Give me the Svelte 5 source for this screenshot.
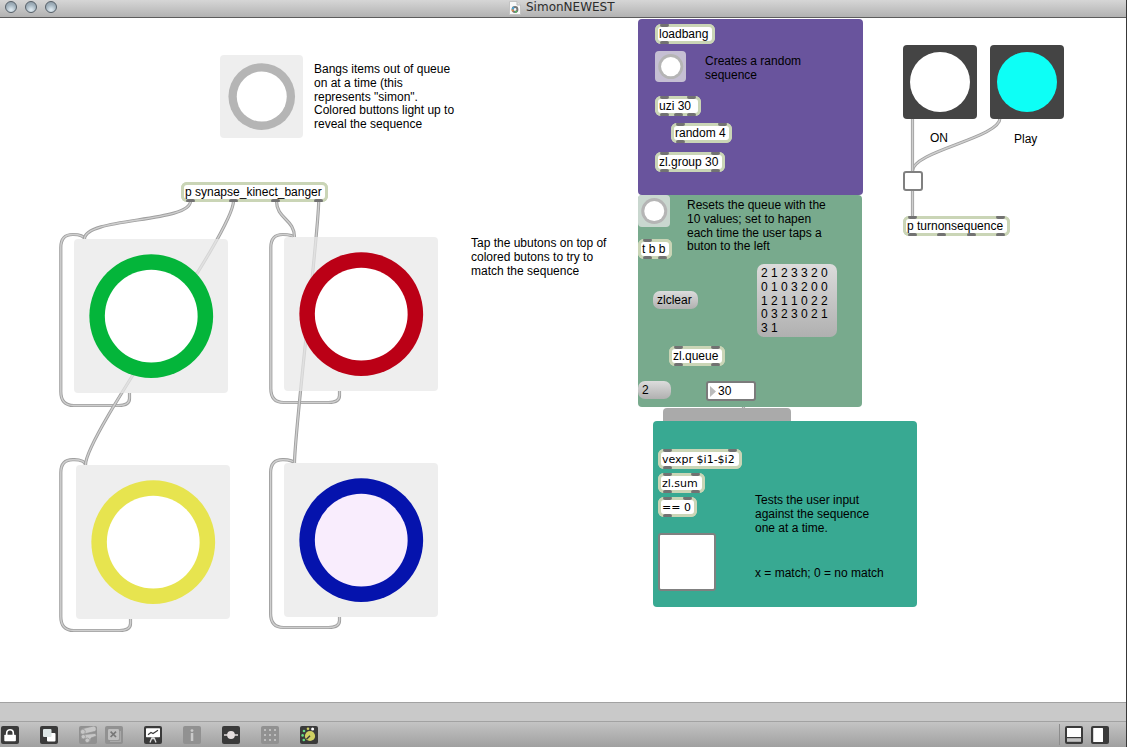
<script>
  const ORIGIN_Y = 18;

  const place = (n) =>
    `left:${n.x}px;top:${n.y - ORIGIN_Y}px;` +
    (n.w ? `width:${n.w}px;` : '') +
    (n.h ? `height:${n.h}px;` : '');

  const panels = [
    { x: 663, y: 408, w: 128, h: 20, color: '#aaaaaa' },
    { x: 638, y: 195, w: 224, h: 212, color: '#78aa8d' },
    { x: 638, y: 19, w: 225, h: 176, color: '#69549d' },
    { x: 653, y: 421, w: 264, h: 186, color: '#38a992' }
  ];

  const bangs = [
    { x: 220, y: 55, w: 83, h: 83, outer: 66.6, ring: 8.3, color: '#b5b5b5', fill: '#fff' },
    { x: 74, y: 239, w: 154, h: 154, outer: 123.8, ring: 15.5, color: '#04b53a', fill: '#fff' },
    { x: 284, y: 237, w: 154, h: 154, outer: 123.8, ring: 15.5, color: '#bb0016', fill: '#fff' },
    { x: 76, y: 465, w: 154, h: 154, outer: 123.8, ring: 15.5, color: '#e7e44f', fill: '#fff' },
    { x: 284, y: 463, w: 154, h: 154, outer: 123.8, ring: 15.5, color: '#0513ad', fill: '#f9edfd' },
    { x: 655, y: 51, w: 31, h: 31, outer: 25, ring: 2.8, color: '#b5b5b5', fill: '#fff' },
    { x: 638, y: 195, w: 32, h: 32, outer: 26, ring: 3, color: '#b5b5b5', fill: '#fff' }
  ];

  const objects = [
    { x: 181, y: 182, w: 147, text: 'p synapse_kinect_banger', ins: 0, outs: 4 },
    { x: 655, y: 24, w: 60, text: 'loadbang', ins: 1, outs: 1 },
    { x: 655, y: 96, w: 46, text: 'uzi 30', ins: 2, outs: 3 },
    { x: 671, y: 123, w: 61, text: 'random 4', ins: 2, outs: 1 },
    { x: 655, y: 152, w: 70, text: 'zl.group 30', ins: 2, outs: 2 },
    { x: 638, y: 239, w: 34, text: 't b b', ins: 1, outs: 2 },
    { x: 669, y: 346, w: 56, text: 'zl.queue', ins: 2, outs: 2 },
    { x: 658, y: 449, w: 84, text: 'vexpr $i1-$i2', ins: 2, outs: 1, wide: true },
    { x: 658, y: 473, w: 47, text: 'zl.sum', ins: 2, outs: 2, wide: true },
    { x: 658, y: 497, w: 39, text: '== 0', ins: 2, outs: 1, wide: true },
    { x: 903, y: 216, w: 107, text: 'p turnonsequence', ins: 2, outs: 4 }
  ];

  const messages = [
    { x: 757, y: 264, w: 80, h: 73, lines: ['2 1 2 3 3 2 0', '0 1 0 3 2 0 0', '1 2 1 1 0 2 2', '0 3 2 3 0 2 1', '3 1'] },
    { x: 653, y: 291, w: 45, h: 18, lines: ['zlclear'] },
    { x: 638, y: 381, w: 33, h: 18, lines: ['2'] }
  ];

  const comments = [
    { x: 314, y: 63, lines: ['Bangs items out of queue', 'on at a time (this', 'represents "simon".', 'Colored buttons light up to', 'reveal the sequence'] },
    { x: 471, y: 237, lines: ['Tap the ubutons on top of', 'colored butons to try to', 'match the sequence'] },
    { x: 705, y: 55, lines: ['Creates a random', 'sequence'] },
    { x: 687, y: 199, lines: ['Resets the queue with the', '10 values; set to hapen', 'each time the user taps a', 'buton to the left'] },
    { x: 755, y: 494, lines: ['Tests the user input', 'against the sequence', 'one at a time.'] },
    { x: 755, y: 567, lines: ['x = match; 0 = no match'] },
    { x: 930, y: 132, lines: ['ON'] },
    { x: 1014, y: 133, lines: ['Play'] }
  ];

  const lamps = [
    { x: 903, y: 45, w: 74, h: 74, color: '#ffffff' },
    { x: 990, y: 45, w: 74, h: 74, color: '#0dfff6' }
  ];

  const toggles = [
    { x: 903, y: 171, w: 20, h: 20 },
    { x: 658, y: 533, w: 58, h: 58 }
  ];

  const cord = (x1, y1, x2, y2, k) => `M${x1} ${y1}C${x1} ${y1 + k} ${x2} ${y2 - k} ${x2} ${y2}`;

  const loop = (left, top, right, bottom, startY, endX, endY) =>
    `M${right} ${startY}V${bottom - 7}C${right} ${bottom - 2} ${right - 5} ${bottom} ${right - 11} ${bottom}` +
    `H${left + 13}C${left + 4} ${bottom} ${left} ${bottom - 5} ${left} ${bottom - 14}` +
    `V${top + 13}C${left} ${top + 4} ${left + 4} ${top} ${left + 12} ${top}` +
    `H${endX - 11}C${endX - 5} ${top} ${endX} ${top + 2} ${endX} ${endY}`;

  const cords = [
    loop(60.8, 234.5, 129.5, 405.5, 393, 84.5, 239),
    loop(270.8, 234.5, 339.5, 402.5, 391, 294.5, 237),
    loop(60.8, 459.7, 130.5, 630.5, 619, 85.5, 465),
    loop(270.6, 459.7, 339.5, 627.5, 617, 294.5, 463),
    cord(190.5, 201, 84.5, 239, 22),
    cord(233.5, 201, 85.5, 465, 32),
    cord(276.5, 201, 294.5, 237, 18),
    cord(318.7, 201, 294.5, 463, 32),
    cord(1000, 118, 912.5, 171, 20),
    'M912.5 118V171',
    'M912.5 190V217',
    'M743.5 400V409'
  ];

  const tools = [
    { id: 'lock' }, { id: 'layers' }, { id: 'cable', off: true }, { id: 'close', off: true, near: true },
    { id: 'present' }, { id: 'info', off: true }, { id: 'slider' }, { id: 'grid', off: true }, { id: 'dial' }
  ];
</script>

<div class="window">
  <header class="titlebar">
    <div class="lights"><i></i><i></i><i></i></div>
    <div class="title">
      <svg width="12" height="14" viewBox="0 0 12 14">
        <path d="M.5.5H8L11.5 4V13.5H.5Z" fill="#f8f8f8" stroke="#c3c3c3" />
        <path d="M8 .5V4H11.5" fill="#ddd" stroke="#bbb" />
        <circle cx="6" cy="8.5" r="2.4" fill="none" stroke="#777" stroke-width="2" />
        <path d="M3.6 8.5A2.4 2.4 0 0 1 5 6.3" fill="none" stroke="#49a5d8" stroke-width="2" />
        <path d="M4 10.2A2.4 2.4 0 0 1 3.6 8.5" fill="none" stroke="#e78b45" stroke-width="2" />
        <path d="M6 10.9A2.4 2.4 0 0 0 7.8 10" fill="none" stroke="#58b861" stroke-width="2" />
      </svg>
      <span>SimonNEWEST</span>
    </div>
  </header>

  <main class="patcher">
    <svg class="cords" width="1127" height="684" viewBox="0 18 1127 684">
      {#each cords as d}
        <path {d} class="edge" />
        <path {d} class="core" />
      {/each}
    </svg>

    {#each panels as p}
      <div class="node panel" style="{place(p)}background:{p.color}"></div>
    {/each}

    {#each bangs as b}
      <div class="node bang" style={place(b)}>
        <svg width={b.w} height={b.h}>
          <circle cx={b.w / 2 + 0.25} cy={b.h / 2 + 0.1} r={b.outer / 2} fill={b.color} />
          <circle cx={b.w / 2 + 0.25} cy={b.h / 2 + 0.1} r={b.outer / 2 - b.ring} fill={b.fill} />
        </svg>
      </div>
    {/each}

    {#each lamps as l}
      <div class="node lamp" style={place(l)}><i style="background:{l.color}"></i></div>
    {/each}

    {#each toggles as t}
      <div class="node toggle" style={place(t)}></div>
    {/each}

    {#each objects as o}
      <div class="node object" class:wide={o.wide} style={place(o)}>
        <div class="ports">{#each Array(o.ins) as _}<i></i>{/each}</div>
        <span>{o.text}</span>
        <div class="ports outs">{#each Array(o.outs) as _}<i></i>{/each}</div>
      </div>
    {/each}

    {#each messages as m}
      <div class="node message" style={place(m)}>
        {#each m.lines as line}<div>{line}</div>{/each}
      </div>
    {/each}

    <div class="node number" style={place({ x: 706, y: 381, w: 50, h: 20 })}>
      <svg width="6" height="11" viewBox="0 0 6 11"><path d="M0 0L6 5.5L0 11Z" fill="#bbb" /></svg>
      <span>30</span>
    </div>

    {#each comments as c}
      <div class="node comment" style={place(c)}>
        {#each c.lines as line}<div>{line}</div>{/each}
      </div>
    {/each}
  </main>

  <div class="status"></div>

  <footer class="toolbar">
    {#each tools as t}
      <svg class="tool" class:off={t.off} class:near={t.near} width="18" height="18" viewBox="0 0 18 18">
        <rect class="tile" width="18" height="18" rx="2" />
        {#if t.id === 'lock'}
          <path d="M5.7 9V7C5.7 2.6 12.3 2.6 12.3 7V9" fill="none" stroke="#fff" stroke-width="1.6" />
          <rect x="3.3" y="8.7" width="11.6" height="6.6" rx=".8" fill="#fff" />
        {:else if t.id === 'layers'}
          <rect x="7" y="7" width="8.5" height="8.5" rx="1" fill="#fff" />
          <rect x="3" y="3" width="8.5" height="8" rx="1" fill="#dde5e5" />
        {:else if t.id === 'cable'}
          <g fill="#c6c6c6" stroke="#929292" stroke-width=".7">
            <rect x="2.4" y="1.4" width="15" height="5.6" rx="2.3" transform="rotate(-13 9 4.5)" />
            <circle cx="3.8" cy="5.8" r="2.5" />
            <path d="M4.5 8.6L16.5 7.4L17.5 10L12 12L11 15.5L7.5 16.8L5.6 14L8.5 12.4L4.5 12.8Z" />
            <circle cx="4.3" cy="10.7" r="2.2" />
            <circle cx="8.3" cy="14.3" r="2.3" />
          </g>
        {:else if t.id === 'close'}
          <path d="M5 15.3H15.3V5" fill="none" stroke="#ababab" stroke-width="1.2" />
          <rect x="3" y="3" width="11" height="11" rx="1.2" fill="#bebebe" />
          <path d="M5.6 5.6L11 11M11 5.6L5.6 11" stroke="#777" stroke-width="1.7" />
        {:else if t.id === 'present'}
          <rect x="2" y="2.2" width="14" height="9" rx=".6" fill="#fff" />
          <path d="M4 8.8L7 6.5L9 7.5L14 4.2" fill="none" stroke="#3a3a3a" stroke-width="1.1" />
          <path d="M8 11.5L6 16.5M10 11.5L12 16.5M9 11V13.5" fill="none" stroke="#ddd" stroke-width="1.3" />
        {:else if t.id === 'info'}
          <circle cx="9" cy="4.6" r="1.4" fill="#cacaca" />
          <rect x="7.8" y="7" width="2.5" height="8" rx=".5" fill="#cacaca" />
        {:else if t.id === 'slider'}
          <path d="M2 9H16" stroke="#d8d3d3" stroke-width="1.6" />
          <circle cx="9" cy="9" r="3.9" fill="#e4dede" />
        {:else if t.id === 'grid'}
          {#each [3, 8, 13] as gx}
            {#each [3, 8, 13] as gy}
              <rect x={gx} y={gy} width="2" height="2" fill="#bdbdbd" />
            {/each}
          {/each}
        {:else}
          <circle cx="10" cy="10" r="5.1" fill="#cfd063" />
          <path d="M6.5 13.3L10 9.8" stroke="#3a3a3a" stroke-width="1.5" />
          <circle cx="3.8" cy="14" r="1.3" fill="#63dd83" />
          <circle cx="2.6" cy="9.4" r="1.3" fill="#63dd83" />
          <circle cx="4" cy="5" r="1.3" fill="#63dd83" />
          <circle cx="8" cy="2.7" r="1.3" fill="#cfd063" />
          <circle cx="12.6" cy="3" r="1.5" fill="#fff" />
        {/if}
      </svg>
    {/each}
    <div class="views">
      <svg width="18" height="18" viewBox="0 0 18 18">
        <rect class="tile" width="18" height="18" rx="2" />
        <rect x="2" y="2" width="14" height="9" fill="#fff" />
        <rect x="2" y="12.2" width="14" height="3.6" fill="#c4c4c4" />
      </svg>
      <svg width="18" height="18" viewBox="0 0 18 18">
        <rect class="tile" width="18" height="18" rx="2" />
        <rect x="2.2" y="2" width="9.8" height="14" rx=".5" fill="#fff" />
      </svg>
    </div>
  </footer>
</div>

<style>
  .window {
    box-sizing: border-box;
    width: 1127px;
    height: 747px;
    display: flex;
    flex-direction: column;
    overflow: hidden;
    background: #fff;
    border-right: 1px solid #383838;
    font: 12px/13.8px "Liberation Sans", Arial, sans-serif;
    color: #000;
  }
  .titlebar {
    flex: none;
    box-sizing: border-box;
    height: 18px;
    display: flex;
    align-items: flex-start;
    background: linear-gradient(#d6d6d6, #b2b2b2);
    border-bottom: 1px solid #5c5c5c;
  }
  .lights {
    display: flex;
    gap: 8px;
    padding: 1px 0 0 5px;
    width: 503px;
    box-sizing: border-box;
  }
  .lights i {
    box-sizing: border-box;
    width: 12px;
    height: 12px;
    border: 1px solid #566069;
    border-radius: 50%;
    background: radial-gradient(circle at 50% 80%, #d9e5ec 10%, #a4b4bf 55%, #8796a1);
  }
  .title {
    display: flex;
    align-items: center;
    gap: 5px;
    height: 15px;
    padding-left: 6px;
    font: 12px/15px "DejaVu Sans", sans-serif;
    color: #2c2c2c;
  }
  .title svg { margin-top: 1px; }
  .patcher {
    flex: none;
    position: relative;
    height: 684px;
    overflow: hidden;
  }
  .cords {
    position: absolute;
    left: 0;
    top: 0;
  }
  .edge { fill: none; stroke: #a0a0a0; stroke-width: 3.2; }
  .core { fill: none; stroke: #cfcfcf; stroke-width: 1.4; }
  .node {
    position: absolute;
    box-sizing: border-box;
    white-space: nowrap;
  }
  .panel { border-radius: 4px; }
  .bang {
    border-radius: 4px;
    background: rgba(232, 232, 232, 0.73);
  }
  .bang svg { display: block; }
  .lamp {
    display: grid;
    place-items: center;
    border-radius: 4px;
    background: #444;
  }
  .lamp i {
    width: 60px;
    height: 60px;
    border-radius: 50%;
  }
  .toggle {
    border: 2px solid #808080;
    border-radius: 3px;
    background: #fff;
  }
  .object {
    height: 20px;
    display: flex;
    flex-direction: column;
    border-radius: 6px;
    background: linear-gradient(#fff, #fff) 3px 3px / calc(100% - 6px) calc(100% - 6px) no-repeat #cad5b6;
  }
  .object::before {
    content: "";
    position: absolute;
    inset: 0;
    border: 3px solid #cad5b6;
    border-radius: 6px;
  }
  .object span {
    position: relative;
    height: 14px;
    line-height: 14px;
    padding-left: 4px;
  }
  .wide span { font: 11px/16px "DejaVu Sans", sans-serif; }
  .ports {
    position: relative;
    display: flex;
    justify-content: space-between;
    height: 3px;
    padding: 0 5px;
  }
  .ports i {
    width: 9px;
    height: 3px;
    border-radius: 1px 1px 2px 2px;
    background: #727272;
  }
  .outs i { border-radius: 2px 2px 1px 1px; }
  .message {
    padding: 3px 4px 0;
    border-radius: 7px;
    background: linear-gradient(#dcdcdc, #b0b0b0);
  }
  .number {
    display: flex;
    align-items: center;
    gap: 2px;
    padding-left: 2px;
    border: 2px solid #7b7b7b;
    border-radius: 3px;
    background: #fff;
  }
  .number span { padding-top: 1px; }
  .status {
    flex: none;
    box-sizing: border-box;
    height: 19px;
    background: #c9c9c9;
    border-top: 1px solid #a2a2a2;
  }
  .toolbar {
    flex: none;
    box-sizing: border-box;
    height: 26px;
    display: flex;
    align-items: flex-start;
    gap: 21px;
    padding: 4px 17px 0 1px;
    background: linear-gradient(#c4c4c4, #a0a0a0);
    border-top: 1px solid #a2a2a2;
  }
  .toolbar svg { flex: none; }
  .near { margin-left: -13px; }
  .tile { fill: #3a3a3a; }
  .off .tile { fill: #919191; }
  .views {
    display: flex;
    gap: 8px;
    box-sizing: border-box;
    height: 21px;
    margin: -2px 0 0 auto;
    padding: 2px 0 0 5px;
    border-left: 1px solid #8c8c8c;
  }
</style>
